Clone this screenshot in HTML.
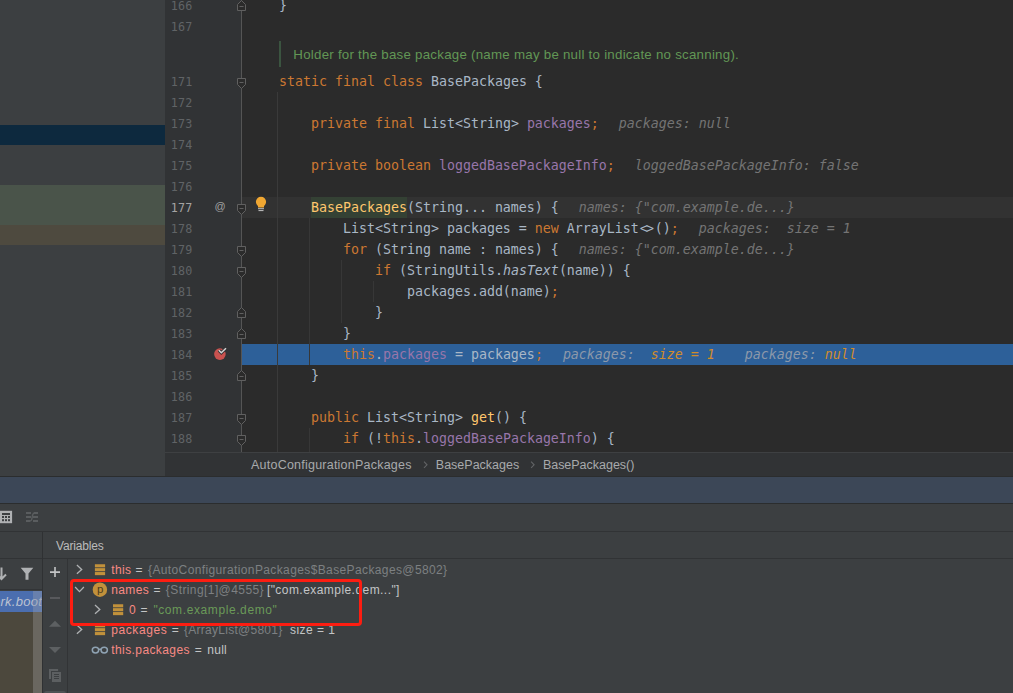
<!DOCTYPE html>
<html lang="en">
<head>
<meta charset="utf-8">
<title>BasePackages debug</title>
<style>
html,body{margin:0;padding:0;}
body{width:1013px;height:693px;overflow:hidden;background:#3c3f41;position:relative;font-family:"Liberation Sans","DejaVu Sans",sans-serif;}
.abs{position:absolute;}
#left{left:0;top:0;width:165px;height:476px;background:#3c3f41;}
#gutter{left:165px;top:0;width:76px;height:452px;background:#313335;}
#editor{left:241px;top:0;width:772px;height:452px;background:#2b2b2b;}
.ln{position:absolute;left:165px;width:848px;height:21px;}
.ln .no{position:absolute;left:0;top:0.5px;width:27.5px;text-align:right;font-family:"DejaVu Sans Mono","Liberation Mono",monospace;font-size:11.7px;letter-spacing:0.25px;line-height:21px;color:#606366;}
.ln .code{position:absolute;left:82px;top:0;margin:0;font-family:"DejaVu Sans Mono","Liberation Mono",monospace;font-size:13.29px;line-height:21px;color:#a9b7c6;white-space:pre;}
.k{color:#cc7832}.p{color:#a9b7c6}.f{color:#9876aa}.m{color:#ffc66d}.i{font-style:italic;color:#a9b7c6}
.mh{color:#ffc66d;}
.dl{position:relative;left:1px}.dr{position:relative;left:-0.9px}
.hint{font-style:italic;color:#747474;}
.cur .no{color:#a4a3a3;}
.exec .hx{color:#8c98aa}.exec .ho{color:#d08b2c}
.guide{position:absolute;width:1px;background:#373737;}
.ui{font-size:12px;line-height:20px;white-space:nowrap;}
.bc{font-size:12.5px;line-height:20px;color:#a8aaac;white-space:nowrap;}
.bc.sep{color:#6e6e6e;}
</style>
</head>
<body>
<div id="left" class="abs">
  <div class="abs" style="left:0;top:125px;width:165px;height:20px;background:#0d293e"></div>
  <div class="abs" style="left:0;top:185px;width:165px;height:40px;background:#4a544a"></div>
  <div class="abs" style="left:0;top:225px;width:165px;height:20px;background:#4e4a3f"></div>
</div>
<div id="gutter" class="abs"></div>
<div id="editor" class="abs"></div>
<div class="abs" style="left:242px;top:197px;width:771px;height:21px;background:#323232"></div>
<div class="abs" style="left:311px;top:197px;width:96px;height:21px;background:#344134"></div>
<div class="abs" style="left:242px;top:344px;width:771px;height:21px;background:#2d6099"></div>
<div class="guide" style="left:277px;top:92px;height:360px;background:#3a3a3a"></div>
<div class="guide" style="left:309px;top:218px;height:147px"></div>
<div class="guide" style="left:309px;top:428px;height:24px"></div>
<div class="guide" style="left:341px;top:260px;height:63px"></div>
<div class="guide" style="left:373px;top:281px;height:21px"></div>

<div class="ln " style="top:-5px"><span class="no">166</span><pre class="code"><span class="p">    }</span></pre></div>
<div class="ln " style="top:16px"><span class="no">167</span><pre class="code"></pre></div>
<div class="ln " style="top:71px"><span class="no">171</span><pre class="code"><span class="k">    static final class </span><span class="p">BasePackages {</span></pre></div>
<div class="ln " style="top:92px"><span class="no">172</span><pre class="code"></pre></div>
<div class="ln " style="top:113px"><span class="no">173</span><pre class="code"><span class="k">        private final </span><span class="p">List&lt;String&gt; </span><span class="f">packages</span><span class="k">;</span><span class="hint" style="margin-left:20px"><span class="h">packages: null</span></span></pre></div>
<div class="ln " style="top:134px"><span class="no">174</span><pre class="code"></pre></div>
<div class="ln " style="top:155px"><span class="no">175</span><pre class="code"><span class="k">        private boolean </span><span class="f">loggedBasePackageInfo</span><span class="k">;</span><span class="hint" style="margin-left:20px"><span class="h">loggedBasePackageInfo: false</span></span></pre></div>
<div class="ln " style="top:176px"><span class="no">176</span><pre class="code"></pre></div>
<div class="ln cur" style="top:197px"><span class="no">177</span><pre class="code"><span class="p">        </span><span class="mh">BasePackages</span><span class="p">(String... names) {</span><span class="hint" style="margin-left:20px"><span class="h">names: {"com.example.de...}</span></span></pre></div>
<div class="ln " style="top:218px"><span class="no">178</span><pre class="code"><span class="p">            List&lt;String&gt; packages = </span><span class="k">new </span><span class="p">ArrayList</span><span class="p dl">&lt;</span><span class="p dr">&gt;</span><span class="p">()</span><span class="k">;</span><span class="hint" style="margin-left:20px"><span class="h">packages:  size = 1</span></span></pre></div>
<div class="ln " style="top:239px"><span class="no">179</span><pre class="code"><span class="k">            for </span><span class="p">(String name : names) {</span><span class="hint" style="margin-left:20px"><span class="h">names: {"com.example.de...}</span></span></pre></div>
<div class="ln " style="top:260px"><span class="no">180</span><pre class="code"><span class="k">                if </span><span class="p">(StringUtils.</span><span class="i">hasText</span><span class="p">(name)) {</span></pre></div>
<div class="ln " style="top:281px"><span class="no">181</span><pre class="code"><span class="p">                    packages.add(name)</span><span class="k">;</span></pre></div>
<div class="ln " style="top:302px"><span class="no">182</span><pre class="code"><span class="p">                }</span></pre></div>
<div class="ln " style="top:323px"><span class="no">183</span><pre class="code"><span class="p">            }</span></pre></div>
<div class="ln exec" style="top:344px"><span class="no">184</span><pre class="code"><span class="k">            this</span><span class="p">.</span><span class="f">packages</span><span class="p"> = packages</span><span class="k">;</span><span class="hint" style="margin-left:20px"><span class="hx">packages:  </span><span class="ho">size = 1</span></span><span class="hint" style="margin-left:30px"><span class="hx">packages: </span><span class="ho">null</span></span></pre></div>
<div class="ln " style="top:365px"><span class="no">185</span><pre class="code"><span class="p">        }</span></pre></div>
<div class="ln " style="top:386px"><span class="no">186</span><pre class="code"></pre></div>
<div class="ln " style="top:407px"><span class="no">187</span><pre class="code"><span class="k">        public </span><span class="p">List&lt;String&gt; </span><span class="m">get</span><span class="p">() {</span></pre></div>
<div class="ln " style="top:428px"><span class="no">188</span><pre class="code"><span class="k">            if </span><span class="p">(!</span><span class="k">this</span><span class="p">.</span><span class="f">loggedBasePackageInfo</span><span class="p">) {</span></pre></div>
<div class="abs" style="left:279px;top:41px;width:2px;height:26px;background:#3b5440"></div>
<div class="abs" id="doctext" style="left:293.300px;top:45px;height:20px;line-height:20px;font-size:13.300px;letter-spacing:0.25px;color:#629755;white-space:nowrap;">Holder for the base package (name may be null to indicate no scanning).</div>

<div class="abs" style="left:241px;top:0;width:1px;height:452px;background:#555555"></div>
<svg class="abs" style="left:236px;top:71px" width="11" height="21" viewBox="0 0 11 21"><path d="M1.5 7.5H9.5V13.5L5.5 17.5L1.5 13.5Z" fill="#2b2b2b" stroke="#606060" stroke-width="1"/><path d="M3.5 11.5H7.5" stroke="#606060" stroke-width="1"/></svg>
<svg class="abs" style="left:236px;top:197px" width="11" height="21" viewBox="0 0 11 21"><path d="M1.5 7.5H9.5V13.5L5.5 17.5L1.5 13.5Z" fill="#2b2b2b" stroke="#606060" stroke-width="1"/><path d="M3.5 11.5H7.5" stroke="#606060" stroke-width="1"/></svg>
<svg class="abs" style="left:236px;top:239px" width="11" height="21" viewBox="0 0 11 21"><path d="M1.5 7.5H9.5V13.5L5.5 17.5L1.5 13.5Z" fill="#2b2b2b" stroke="#606060" stroke-width="1"/><path d="M3.5 11.5H7.5" stroke="#606060" stroke-width="1"/></svg>
<svg class="abs" style="left:236px;top:260px" width="11" height="21" viewBox="0 0 11 21"><path d="M1.5 7.5H9.5V13.5L5.5 17.5L1.5 13.5Z" fill="#2b2b2b" stroke="#606060" stroke-width="1"/><path d="M3.5 11.5H7.5" stroke="#606060" stroke-width="1"/></svg>
<svg class="abs" style="left:236px;top:407px" width="11" height="21" viewBox="0 0 11 21"><path d="M1.5 7.5H9.5V13.5L5.5 17.5L1.5 13.5Z" fill="#2b2b2b" stroke="#606060" stroke-width="1"/><path d="M3.5 11.5H7.5" stroke="#606060" stroke-width="1"/></svg>
<svg class="abs" style="left:236px;top:428px" width="11" height="21" viewBox="0 0 11 21"><path d="M1.5 7.5H9.5V13.5L5.5 17.5L1.5 13.5Z" fill="#2b2b2b" stroke="#606060" stroke-width="1"/><path d="M3.5 11.5H7.5" stroke="#606060" stroke-width="1"/></svg>
<svg class="abs" style="left:236px;top:-5px" width="11" height="21" viewBox="0 0 11 21"><path d="M1.5 15.5H9.5V9.5L5.5 5.5L1.5 9.5Z" fill="#2b2b2b" stroke="#606060" stroke-width="1"/><path d="M3.5 11.5H7.5" stroke="#606060" stroke-width="1"/></svg>
<svg class="abs" style="left:236px;top:302px" width="11" height="21" viewBox="0 0 11 21"><path d="M1.5 15.5H9.5V9.5L5.5 5.5L1.5 9.5Z" fill="#2b2b2b" stroke="#606060" stroke-width="1"/><path d="M3.5 11.5H7.5" stroke="#606060" stroke-width="1"/></svg>
<svg class="abs" style="left:236px;top:323px" width="11" height="21" viewBox="0 0 11 21"><path d="M1.5 15.5H9.5V9.5L5.5 5.5L1.5 9.5Z" fill="#2b2b2b" stroke="#606060" stroke-width="1"/><path d="M3.5 11.5H7.5" stroke="#606060" stroke-width="1"/></svg>
<svg class="abs" style="left:236px;top:365px" width="11" height="21" viewBox="0 0 11 21"><path d="M1.5 15.5H9.5V9.5L5.5 5.5L1.5 9.5Z" fill="#2b2b2b" stroke="#606060" stroke-width="1"/><path d="M3.5 11.5H7.5" stroke="#606060" stroke-width="1"/></svg>
<div class="abs" style="left:213px;top:197.300px;width:14px;height:21px;line-height:19px;text-align:center;font-size:11px;color:#a0a0a0;font-family:'Liberation Sans',sans-serif">@</div>
<svg class="abs" style="left:254px;top:195px" width="14" height="18" viewBox="0 0 14 18"><path d="M7 1.7a5.1 5.1 0 0 1 5.1 5.1c0 2-1.1 3.2-2.1 4.2v1.4H4v-1.4C3 10 1.9 8.800 1.900 6.800A5.100 5.100 0 0 1 7 1.700z" fill="#f0a732"/><rect x="4" y="13.200" width="6" height="1" fill="#c4c4c4"/><rect x="4.500" y="15.100" width="5" height="1" fill="#c4c4c4"/></svg>
<svg class="abs" style="left:212px;top:345px" width="18" height="18" viewBox="0 0 18 18"><circle cx="7.900" cy="9.100" r="5.800" fill="#c9524f"/><path d="M6.900 5.300L9.300 7.700L14 3.300" fill="none" stroke="#313335" stroke-width="3.200"/><path d="M6.900 5.300L9.300 7.700L14 3.300" fill="none" stroke="#d4d4d4" stroke-width="1.500"/></svg>
<div class="abs" style="left:165px;top:452px;width:848px;height:24px;background:#313335;border-top:1px solid #3e4042;box-sizing:border-box"></div>
<div class="abs bc" id="bc1" style="left:251px;top:454.500px;letter-spacing:0.23px">AutoConfigurationPackages</div>
<div class="abs bc" id="bc2" style="left:435.800px;top:454.500px;letter-spacing:0px">BasePackages</div>
<div class="abs bc" id="bc3" style="left:542.900px;top:454.500px;letter-spacing:-0.02px">BasePackages()</div>
<svg class="abs" style="left:420px;top:458px" width="120" height="14" viewBox="0 0 120 14">
  <path d="M4 3.700L7 6.800L4 9.900" fill="none" stroke="#626466" stroke-width="1.100"/>
  <path d="M111.100 3.700L114.100 6.800L111.100 9.900" fill="none" stroke="#626466" stroke-width="1.100"/>
</svg>

<div class="abs" style="left:0;top:476px;width:1013px;height:1px;background:#2b2d2e"></div>
<div class="abs" style="left:0;top:477px;width:1013px;height:26px;background:#3c4757"></div>
<div class="abs" style="left:0;top:503px;width:1013px;height:1px;background:#2b2d2e"></div>
<div class="abs" style="left:0;top:504px;width:1013px;height:189px;background:#3c3f41"></div>
<div class="abs" style="left:0;top:531px;width:1013px;height:1px;background:#313335"></div>
<div class="abs" style="left:0;top:558px;width:1013px;height:1px;background:#313335"></div>
<div class="abs" style="left:42px;top:532px;width:1px;height:161px;background:#2f3133"></div>
<div class="abs" style="left:67px;top:559px;width:1px;height:134px;background:#323436"></div>
<!-- toolbar icons -->
<svg class="abs" style="left:0;top:510px" width="40" height="14" viewBox="0 0 40 14">
  <rect x="0" y="0.800" width="12.100" height="12.400" fill="#afb1b3"/>
  <rect x="2" y="3" width="8" height="2" fill="#3c3f41"/>
  <rect x="2" y="6" width="2" height="2" fill="#3c3f41"/><rect x="5" y="6" width="2" height="2" fill="#3c3f41"/><rect x="8" y="6" width="2" height="2" fill="#3c3f41"/>
  <rect x="2" y="9.200" width="2" height="2" fill="#3c3f41"/><rect x="5" y="9.200" width="2" height="2" fill="#3c3f41"/><rect x="8" y="9.200" width="2" height="2" fill="#3c3f41"/>
  <g fill="#5a5d5f">
    <rect x="26" y="2" width="5" height="2"/><rect x="34" y="2" width="4" height="2"/>
    <rect x="26" y="6" width="5" height="2"/><rect x="33" y="6" width="5" height="2"/>
    <rect x="26" y="10" width="4" height="2"/><rect x="33" y="10" width="5" height="2"/>
  </g>
  <path d="M30 11C33.500 11 31 3 34.500 3" fill="none" stroke="#5a5d5f" stroke-width="1.400"/>
</svg>
<div class="abs ui" id="varhdr" style="left:56px;top:536px;color:#bbbbbb;letter-spacing:-0.18px">Variables</div>
<!-- frames panel -->
<div class="abs" style="left:0;top:589px;width:42px;height:1px;background:#323436"></div>
<div class="abs" style="left:0;top:591px;width:42px;height:21px;background:#4b6eaf;overflow:hidden">
  <div id="frametxt" style="position:absolute;right:0px;top:0;white-space:nowrap;font-style:italic;font-size:13px;letter-spacing:0.25px;line-height:21px;color:#bcc2d2;">org.springframework.boot</div>
</div>
<div class="abs" style="left:0;top:612px;width:42px;height:81px;background:#4c483d"></div>
<div class="abs" style="left:32.500px;top:591px;width:9.500px;height:21px;background:rgba(140,150,170,0.45)"></div>
<div class="abs" style="left:32.500px;top:612px;width:9.500px;height:81px;background:#6a6760"></div>
<svg class="abs" style="left:0;top:566px" width="40" height="16" viewBox="0 0 40 16">
  <path d="M1.500 1.500V12.500M-3 8.500L1.500 13L6 8.500" fill="none" stroke="#afb1b3" stroke-width="2"/>
  <path d="M20.700 1.700H33.300L28.500 7.500V13.700H25.500V7.500Z" fill="#afb1b3"/>
</svg>
<!-- variables toolbar -->
<svg class="abs" style="left:43px;top:559px" width="24" height="134" viewBox="0 0 24 134">
  <path d="M7 13.100H17M12 8.100V18.100" stroke="#c3c5c6" stroke-width="1.600" fill="none"/>
  <path d="M7 39H17" stroke="#5f6163" stroke-width="1.600" fill="none"/>
  <path d="M6 67.800L12 61.800L18 67.800Z" fill="#5d6062"/>
  <path d="M6 88.100L12 94.100L18 88.100Z" fill="#5d6062"/>
  <g fill="#5c5f61">
    <rect x="6" y="110" width="9.100" height="2"/><rect x="6" y="110" width="2" height="10"/>
    <rect x="9" y="113" width="9" height="10"/>
  </g>
  <rect x="11" y="115" width="5" height="1" fill="#3c3f41"/><rect x="11" y="117" width="5" height="1" fill="#3c3f41"/><rect x="11" y="119" width="5" height="1" fill="#3c3f41"/>
  <rect x="1" y="132" width="22" height="6" rx="2.500" fill="#4e5254"/>
</svg>
<span class="abs ui tv" style="left:111.30px;top:560px;color:#f88a84;letter-spacing:0.328px">this</span>
<span class="abs ui tv" style="left:135.60px;top:560px;color:#c3c5c6;letter-spacing:0.000px">=</span>
<span class="abs ui tv" style="left:148.00px;top:560px;color:#7d8082;letter-spacing:0.380px">{AutoConfigurationPackages$BasePackages@5802}</span>
<span class="abs ui tv" style="left:111.30px;top:580px;color:#f88a84;letter-spacing:0.334px">names</span>
<span class="abs ui tv" style="left:153.40px;top:580px;color:#c3c5c6;letter-spacing:0.000px">=</span>
<span class="abs ui tv" style="left:165.80px;top:580px;color:#7d8082;letter-spacing:0.413px">{String[1]@4555}</span>
<span class="abs ui tv" style="left:266.90px;top:580px;color:#c3c5c6;letter-spacing:0.444px">["com.example.dem..."]</span>
<span class="abs ui tv" style="left:129.10px;top:600px;color:#f88a84;letter-spacing:0.000px">0</span>
<span class="abs ui tv" style="left:140.50px;top:600px;color:#c3c5c6;letter-spacing:0.000px">=</span>
<span class="abs ui tv" style="left:153.40px;top:600px;color:#6a9a58;letter-spacing:0.598px">"com.example.demo"</span>
<span class="abs ui tv" style="left:111.30px;top:620px;color:#f88a84;letter-spacing:0.566px">packages</span>
<span class="abs ui tv" style="left:171.70px;top:620px;color:#c3c5c6;letter-spacing:0.000px">=</span>
<span class="abs ui tv" style="left:184.00px;top:620px;color:#7d8082;letter-spacing:0.266px">{ArrayList@5801}</span>
<span class="abs ui tv" style="left:289.90px;top:620px;color:#c3c5c6;letter-spacing:0.487px">size = 1</span>
<span class="abs ui tv" style="left:111.30px;top:640px;color:#f88a84;letter-spacing:0.401px">this.packages</span>
<span class="abs ui tv" style="left:194.80px;top:640px;color:#c3c5c6;letter-spacing:0.000px">=</span>
<span class="abs ui tv" style="left:207.30px;top:640px;color:#c3c5c6;letter-spacing:0.253px">null</span>
<svg class="abs" style="left:68px;top:559px" width="60" height="110" viewBox="68 559 60 110"><path d="M76.9 565.1L81.7 569.4L76.9 573.7" fill="none" stroke="#afb1b3" stroke-width="1.300"/><rect x="94.9" y="564.25" width="10.200" height="3.100" fill="#c1913b"/><rect x="94.9" y="568.15" width="10.200" height="3.100" fill="#c1913b"/><rect x="94.9" y="572.05" width="10.200" height="3.100" fill="#c1913b"/><path d="M75.1 587.0L79.5 591.6L83.9 587.0" fill="none" stroke="#afb1b3" stroke-width="1.300"/><circle cx="99.900" cy="589.700" r="7.200" fill="#c1913b"/><path d="M95.0 605.1L99.8 609.4L95.0 613.7" fill="none" stroke="#afb1b3" stroke-width="1.300"/><rect x="113.0" y="604.25" width="10.200" height="3.100" fill="#c1913b"/><rect x="113.0" y="608.15" width="10.200" height="3.100" fill="#c1913b"/><rect x="113.0" y="612.05" width="10.200" height="3.100" fill="#c1913b"/><path d="M76.9 625.1L81.7 629.4L76.9 633.7" fill="none" stroke="#afb1b3" stroke-width="1.300"/><rect x="94.9" y="624.25" width="10.200" height="3.100" fill="#c1913b"/><rect x="94.9" y="628.15" width="10.200" height="3.100" fill="#c1913b"/><rect x="94.9" y="632.05" width="10.200" height="3.100" fill="#c1913b"/><g fill="none" stroke="#8fa3b3" stroke-width="1.500"><ellipse cx="95.500" cy="650.100" rx="3.200" ry="2.900"/><ellipse cx="104.200" cy="650.100" rx="3.200" ry="2.900"/><path d="M98.500 649.300H101.200"/></g></svg>
<span class="abs" style="left:97px;top:579px;font-size:11.500px;line-height:20px;color:#4d3c1c;font-family:'Liberation Sans',sans-serif">p</span>
<div class="abs" style="left:70px;top:579px;width:286px;height:41px;border:3px solid #fd1d11;border-radius:4px"></div>

</body>
</html>
